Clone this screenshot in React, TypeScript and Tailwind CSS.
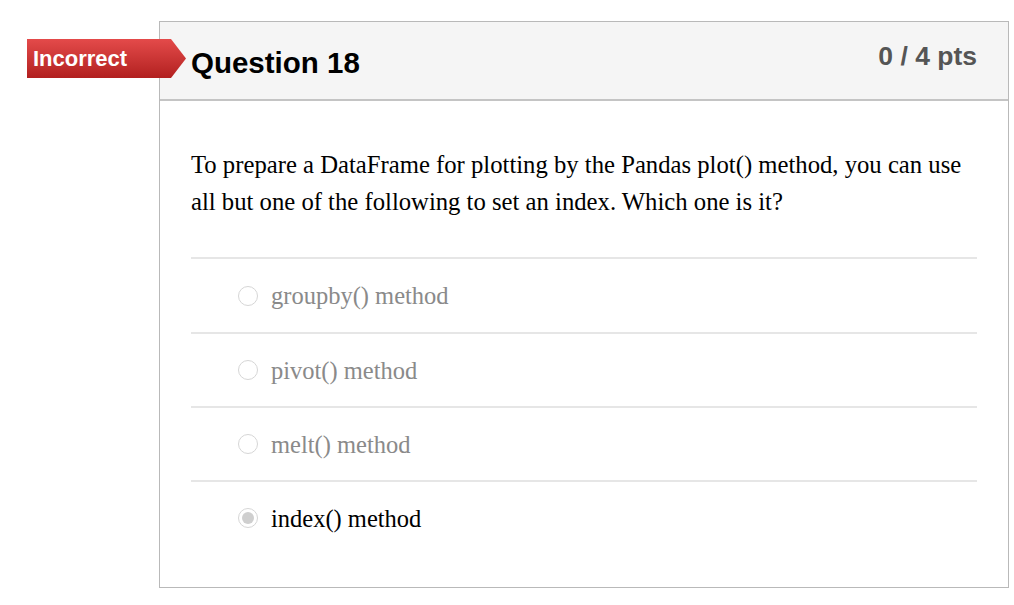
import React from 'react';

const answers = [
  { label: 'groupby() method', selected: false },
  { label: 'pivot() method', selected: false },
  { label: 'melt() method', selected: false },
  { label: 'index() method', selected: true },
];

function Radio({ checked }: { checked: boolean }) {
  return (
    <span className="w-[20px] h-[20px] rounded-full border border-[#d6d6d6] bg-white flex items-center justify-center shrink-0">
      {checked && <span className="w-[12px] h-[12px] rounded-full bg-[#cfcfcf]"></span>}
    </span>
  );
}

export default function App() {
  return (
    <div className="relative w-[1014px] h-[605px] bg-white overflow-hidden">
      {/* Incorrect badge */}
      <div className="absolute left-[27px] top-[39px] z-10 w-[159px] h-[39px] bg-gradient-to-b from-[#e44a4a] to-[#b21f1f] [clip-path:polygon(0_0,calc(100%-15px)_0,100%_50%,calc(100%-15px)_100%,0_100%)] flex items-center pl-[6px]">
        <span className="text-white font-bold text-[22px] leading-none font-['Liberation_Sans',Arial,sans-serif]">Incorrect</span>
      </div>

      <div className="ml-[159px] mt-[21px] w-[850px] border border-[#b9b9b9] bg-white">
        {/* Header */}
        <div className="h-[79px] bg-[#f5f5f5] border-b-2 border-[#c4c4c4] flex justify-between px-[31px] font-['Liberation_Sans',Arial,sans-serif]">
          <h2 className="pt-[24px] text-[29.5px] leading-[34px] font-bold text-black">Question 18</h2>
          <div className="pt-[18px] text-[26.5px] leading-[32px] font-bold text-[#555]">0 / 4 pts</div>
        </div>

        {/* Body */}
        <div className="px-[31px] pt-[45px] pb-[33px] font-['Liberation_Serif','Times_New_Roman',serif]">
          <p className="text-[24.7px] leading-[37px] text-black">
            To prepare a DataFrame for plotting by the Pandas plot() method, you can use all but one of the following to set an index. Which one is it?
          </p>
          <div className="mt-[37px]">
            {answers.map((a, i) => (
              <div key={a.label} className={`border-t-2 border-[#e6e6e6] flex items-center pl-[47px] gap-[13px] ${i === 0 ? 'h-[75px]' : 'h-[74px]'}`}>
                <Radio checked={a.selected} />
                <span className={`text-[24.5px] pt-[2px] ${a.selected ? 'text-black' : 'text-[#8a8a8a]'}`}>{a.label}</span>
              </div>
            ))}
          </div>
        </div>
      </div>
    </div>
  );
}
